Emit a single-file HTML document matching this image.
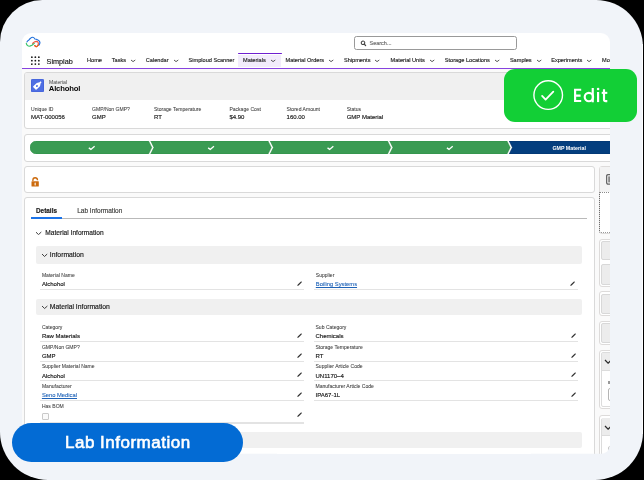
<!DOCTYPE html>
<html><head><meta charset="utf-8">
<style>
*{margin:0;padding:0;box-sizing:border-box}
html,body{width:644px;height:480px;overflow:hidden;background:#000}
body{position:relative;font-family:"Liberation Sans",sans-serif;color:#181818}
.frame{position:absolute;left:0.3px;top:0.3px;width:642.5px;height:480px;border-radius:42.3px 47px 48px 48px;background:#f1f4f9}
.app{will-change:transform;position:absolute;left:0;top:0;width:644px;height:480px;clip-path:inset(33px 34px 26.2px 22px round 9px);background:#fafafa}
.a{position:absolute}
.t{position:absolute;white-space:nowrap;line-height:1;-webkit-text-stroke:0.15px currentColor}
.card{position:absolute;background:#fff;border:1px solid #d9d9d9;border-radius:3px}
.nav{font-size:5.6px;color:#1f1f1f}
.chev{position:absolute;width:3px;height:3px;border-right:0.8px solid #444;border-bottom:0.8px solid #444;transform:rotate(45deg)}
.lbl{font-size:5.05px;color:#3a3a3a;-webkit-text-stroke:0.05px currentColor}
.val{font-size:6px;color:#181818}
.uline{position:absolute;height:1.2px;background:#e3e3e3}
.pen{position:absolute;width:1.5px;height:6px;background:#3a3a3a;transform:rotate(45deg);border-radius:0.5px}
.sec{position:absolute;background:#f0f0f0;border-radius:2px}
.link{margin-top:0.6px;color:#1f63b8;font-size:5.8px;text-decoration:underline;text-decoration-thickness:0.5px;text-underline-offset:0.9px;-webkit-text-stroke:0.1px currentColor}
.sb{position:absolute;left:599.1px;width:30px;background:#fff;border:1px solid #dddbda;border-radius:3px}
.sbbtn{position:absolute;left:601.2px;width:30px;background:#ececec;border:1px solid #d8d8d8;border-radius:2px}
</style></head><body>
<div class="frame"></div>
<div class="a" style="left:641.8px;top:44px;width:1px;height:390px;background:#fcfdfe"></div>
<div class="app">
  <!-- header white -->
  <div class="a" style="left:22px;top:33px;width:588px;height:36px;background:#fff"></div>
  <!-- logo -->
  <svg class="a" style="left:25px;top:36px" width="17" height="12" viewBox="0 0 17 12">
    <path d="M2 5.9 C2.3 4.9 3 4.3 3.7 4.2 C4.3 3.3 4.8 2.6 5.6 2.2 C6.3 1.5 7 1.2 7.75 1.2 C8.8 1.2 9.4 2.2 9.9 3 C10.8 3 11.7 3.2 12.4 3.7 C13.6 4.3 14.3 4.8 14.6 5.6 C15 6.3 15 7 14.8 7.4 C14.6 8.2 14.2 8.8 13.7 9.3" fill="none" stroke="#1f6fdc" stroke-width="1.15" stroke-linecap="round"/>
    <path d="M1.3 7.4 C1.5 8.4 2 9.1 2.6 9.6 C3.1 10 3.6 10.2 4.2 10.2 C5.3 10.2 6.1 9.8 6.8 9.3 C7.7 8.6 8.5 8 9.3 7.3" fill="none" stroke="#38c46a" stroke-width="1.15" stroke-linecap="round"/>
    <path d="M7.6 7.4 C8.2 6.7 8.7 6.3 9.3 6 C10 5.6 10.8 5.4 11.5 5.4 C12.4 5.5 13 6 13.2 6.8 C13.5 7.6 13.4 8.4 13.1 9 C12.7 9.9 12.1 10.5 11.5 10.6 C10.8 10.7 10.2 10.2 9.8 9.6" fill="none" stroke="#f0593f" stroke-width="1.15" stroke-linecap="round"/>
    <path d="M13.1 9 C12.7 9.9 12.1 10.5 11.5 10.6 C10.8 10.7 10.2 10.2 9.8 9.6" fill="none" stroke="#e8651c" stroke-width="1.15" stroke-linecap="round"/>
  </svg>
  <!-- search -->
  <div class="a" style="left:354px;top:36px;width:163px;height:13.8px;border:1.2px solid #999;border-radius:2.5px;background:#fff"></div>
  <svg class="a" style="left:360px;top:40px" width="7" height="7" viewBox="0 0 7 7"><circle cx="3" cy="2.8" r="1.75" fill="none" stroke="#444" stroke-width="1.05"/><path d="M4.2 4.1 L5.6 5.5" stroke="#444" stroke-width="1.2" stroke-linecap="round"/></svg>
  <div class="t" style="left:369.5px;top:41.3px;font-size:5.5px;color:#6b6b6b">Search...</div>

  <!-- nav bar -->
  <div class="a" style="left:22px;top:50px;width:588px;height:19px;background:#fff"></div>
  <svg class="a" style="left:31px;top:56px" width="10" height="10" viewBox="0 0 10 10" fill="#1a1a1a"><circle cx="0.85" cy="1.20" r="0.9"/><circle cx="0.85" cy="4.65" r="0.9"/><circle cx="0.85" cy="8.10" r="0.9"/><circle cx="4.35" cy="1.20" r="0.9"/><circle cx="4.35" cy="4.65" r="0.9"/><circle cx="4.35" cy="8.10" r="0.9"/><circle cx="7.85" cy="1.20" r="0.9"/><circle cx="7.85" cy="4.65" r="0.9"/><circle cx="7.85" cy="8.10" r="0.9"/></svg>
  <div class="t" style="left:46.6px;top:57.7px;font-size:7.25px;color:#181818">Simplab</div>
  <div class="a" style="left:238px;top:55.3px;width:42.8px;height:11.3px;background:#f2ecfb"></div>
  <div class="a" style="left:237.6px;top:53px;width:44px;height:1.3px;background:#6f1fd0;border-radius:0.6px"></div>
  <div class="t nav" style="left:87px;top:58px">Home</div>
  <div class="t nav" style="left:111.8px;top:58px">Tasks</div><svg class="a" style="left:130.20px;top:59.3px" width="7" height="4" viewBox="0 0 7 4"><path d="M1 1 L3.05 2.6 L5.3 1" stroke="#555" stroke-width="1" fill="none"/></svg>
  <div class="t nav" style="left:145.8px;top:58px">Calendar</div><svg class="a" style="left:172.85px;top:59.3px" width="7" height="4" viewBox="0 0 7 4"><path d="M1 1 L3.05 2.6 L5.3 1" stroke="#555" stroke-width="1" fill="none"/></svg>
  <div class="t nav" style="left:188.6px;top:58px">Simploud Scanner</div>
  <div class="t nav" style="left:243px;top:58px">Materials</div><svg class="a" style="left:270.05px;top:59.3px" width="7" height="4" viewBox="0 0 7 4"><path d="M1 1 L3.05 2.6 L5.3 1" stroke="#555" stroke-width="1" fill="none"/></svg>
  <div class="t nav" style="left:285.5px;top:58px">Material Orders</div><svg class="a" style="left:328.30px;top:59.3px" width="7" height="4" viewBox="0 0 7 4"><path d="M1 1 L3.05 2.6 L5.3 1" stroke="#555" stroke-width="1" fill="none"/></svg>
  <div class="t nav" style="left:344px;top:58px">Shipments</div><svg class="a" style="left:374.30px;top:59.3px" width="7" height="4" viewBox="0 0 7 4"><path d="M1 1 L3.05 2.6 L5.3 1" stroke="#555" stroke-width="1" fill="none"/></svg>
  <div class="t nav" style="left:390.6px;top:58px">Material Units</div><svg class="a" style="left:429.20px;top:59.3px" width="7" height="4" viewBox="0 0 7 4"><path d="M1 1 L3.05 2.6 L5.3 1" stroke="#555" stroke-width="1" fill="none"/></svg>
  <div class="t nav" style="left:444.8px;top:58px">Storage Locations</div><svg class="a" style="left:494.30px;top:59.3px" width="7" height="4" viewBox="0 0 7 4"><path d="M1 1 L3.05 2.6 L5.3 1" stroke="#555" stroke-width="1" fill="none"/></svg>
  <div class="t nav" style="left:509.9px;top:58px">Samples</div><svg class="a" style="left:536.10px;top:59.3px" width="7" height="4" viewBox="0 0 7 4"><path d="M1 1 L3.05 2.6 L5.3 1" stroke="#555" stroke-width="1" fill="none"/></svg>
  <div class="t nav" style="left:551.2px;top:58px">Experiments</div><svg class="a" style="left:586.30px;top:59.3px" width="7" height="4" viewBox="0 0 7 4"><path d="M1 1 L3.05 2.6 L5.3 1" stroke="#555" stroke-width="1" fill="none"/></svg>
  <div class="t nav" style="left:602px;top:58px">More</div>
  <div class="a" style="left:22px;top:68px;width:588px;height:1.4px;background:#8743df"></div>

  <!-- material header card -->
  <div class="card" style="left:23.6px;top:72.3px;width:620px;height:56.8px;overflow:hidden">
    <div class="a" style="left:0;top:0;width:100%;height:26.8px;background:#f0f0f0"></div>
  </div>
  <div class="a" style="left:30.8px;top:79px;width:13.2px;height:13.4px;background:#4f6fe3;border-radius:1.6px;box-shadow:inset 0 0 0 0.6px #4260d8"></div>
  <svg class="a" style="left:30.8px;top:79px" width="13.2" height="13.4" viewBox="0 0 13.2 13.4">
    <g transform="translate(7.1 5.8) rotate(45)">
      <path d="M-2.3 -0.4 L-0.75 -2.9 L-0.75 -4.2 L0.75 -4.2 L0.75 -2.9 L2.3 -0.4 L2.3 4.5 Q2.3 5.2 1.6 5.2 L-1.6 5.2 Q-2.3 5.2 -2.3 4.5 Z" fill="#fff"/>
      <path d="M-1 1.6 A1 1 0 0 0 1 1.6 Z" fill="#4f6fe3"/>
      <circle cx="0" cy="1.5" r="0.85" fill="#4f6fe3"/>
    </g>
  </svg>
  <div class="t" style="left:48.9px;top:79.5px;font-size:5.1px;color:#444;-webkit-text-stroke:0">Material</div>
  <div class="t" style="left:48.8px;top:85.2px;font-size:7.7px;letter-spacing:-0.2px;font-weight:bold;color:#080707;-webkit-text-stroke:0">Alchohol</div>

  <div class="t lbl" style="left:31px;top:106.9px">Unique ID</div>
  <div class="t val" style="left:31px;top:113.8px">MAT-000056</div>
  <div class="t lbl" style="left:92px;top:106.9px">GMP/Non GMP?</div>
  <div class="t val" style="left:92px;top:113.8px">GMP</div>
  <div class="t lbl" style="left:154px;top:106.9px">Storage Temperature</div>
  <div class="t val" style="left:154px;top:113.8px">RT</div>
  <div class="t lbl" style="left:229.4px;top:106.9px">Package Cost</div>
  <div class="t val" style="left:229.4px;top:113.8px">$4.90</div>
  <div class="t lbl" style="left:286.6px;top:106.9px">Stored Amount</div>
  <div class="t val" style="left:286.6px;top:113.8px">160.00</div>
  <div class="t lbl" style="left:346.7px;top:106.9px">Status</div>
  <div class="t val" style="left:346.7px;top:113.8px">GMP Material</div>

  <!-- path card -->
  <div class="card" style="left:23.6px;top:134.3px;width:620px;height:27.3px"></div>
  <svg class="a" style="left:30px;top:141px" width="590" height="13" viewBox="0 0 590 13">
    <path d="M6.5 0 H118.50 L121.70 6.5 L118.50 13 H6.5 A6.5 6.5 0 0 1 6.5 0 Z" fill="#3a9b53" stroke="#2b8e45" stroke-width="0.6"/>
    <path d="M120.80 0 H237.97 L241.17 6.5 L237.97 13 H120.80 L124.00 6.5 Z" fill="#3a9b53" stroke="#2b8e45" stroke-width="0.6"/>
    <path d="M240.27 0 H357.44 L360.64 6.5 L357.44 13 H240.27 L243.47 6.5 Z" fill="#3a9b53" stroke="#2b8e45" stroke-width="0.6"/>
    <path d="M359.74 0 H476.91 L480.11 6.5 L476.91 13 H359.74 L362.94 6.5 Z" fill="#3a9b53" stroke="#2b8e45" stroke-width="0.6"/>
    <path d="M479.21 0 H590 V13 H479.21 L482.41 6.5 Z" fill="#043e7e" stroke="#032f66" stroke-width="0.6"/>
    <g fill="none" stroke="#fff" stroke-width="1.3">
      <path d="M58.80 6.9 L60.90 8.4 L64.60 5.25"/>
      <path d="M178.17 6.9 L180.27 8.4 L183.97 5.25"/>
      <path d="M297.54 6.9 L299.64 8.4 L303.34 5.25"/>
      <path d="M416.91 6.9 L419.01 8.4 L422.71 5.25"/>
    </g>
  </svg>
  <div class="t" style="left:552.4px;top:145.8px;font-size:5.3px;font-weight:bold;color:#fff;-webkit-text-stroke:0">GMP Material</div>

  <!-- lock card -->
  <div class="card" style="left:23.6px;top:166.3px;width:571px;height:26.4px"></div>
  <svg class="a" style="left:30.6px;top:176.9px" width="9" height="10" viewBox="0 0 9 10">
    <path d="M1.9 4 V3.1 C1.9 1.5 2.9 0.75 4.1 0.75 C5.3 0.75 6.4 1.5 6.5 3 L6.5 3.3" fill="none" stroke="#cc6a0c" stroke-width="1.35"/>
    <rect x="0.5" y="4.3" width="7.3" height="5.3" rx="0.5" fill="#cc6a0c"/>
    <rect x="3.6" y="5.6" width="1.1" height="2.9" rx="0.5" fill="#fff"/>
  </svg>

  <!-- tabs card -->
  <div class="card" style="left:23.6px;top:197.1px;width:571px;height:300px"></div>
  <div class="t" style="left:36px;top:207.6px;font-size:6.4px;font-weight:bold;color:#181818">Details</div>
  <div class="t" style="left:77.2px;top:207.6px;font-size:6.5px;color:#3e3e3c">Lab Information</div>
  <div class="a" style="left:30.9px;top:218px;width:556px;height:1px;background:#b9b9b9"></div>
  <div class="a" style="left:30.9px;top:217.4px;width:31.3px;height:1.6px;background:#1b73e8"></div>
  <svg class="a" style="left:35.10px;top:230.80px" width="7.3" height="4.6"><path d="M1.00 1.20 L3.50 3.60 L6.30 1.00" stroke="#3e3e3e" stroke-width="1.0" fill="none"/></svg>
  <div class="t" style="left:45.3px;top:229.6px;font-size:6.6px;color:#181818">Material Information</div>

  <!-- section Information -->
  <div class="sec" style="left:36px;top:246.4px;width:546px;height:17.2px"></div>
  <svg class="a" style="left:41.00px;top:253.40px" width="7.2" height="4.5"><path d="M1.00 1.00 L3.50 3.50 L6.20 1.00" stroke="#3e3e3e" stroke-width="1.0" fill="none"/></svg>
  <div class="t" style="left:49.8px;top:252.2px;font-size:6.8px;color:#181818">Information</div>

  <div class="t lbl" style="left:41.9px;top:273px">Material Name</div>
  <div class="t val" style="left:41.9px;top:281.4px">Alchohol</div>
  <div class="uline" style="left:40.4px;top:289px;width:263.6px"></div>
  <svg class="a" style="left:296.65px;top:280.90px" width="5.2" height="5.2" viewBox="0 0 5.2 5.2"><path d="M0.2 5.0 L0.75 3.55 L3.65 0.65 Q4.15 0.15 4.65 0.6 Q5.05 1.05 4.6 1.55 L1.65 4.45 Z" fill="#333"/></svg>
  <svg class="a" style="left:570.45px;top:280.90px" width="5.2" height="5.2" viewBox="0 0 5.2 5.2"><path d="M0.2 5.0 L0.75 3.55 L3.65 0.65 Q4.15 0.15 4.65 0.6 Q5.05 1.05 4.6 1.55 L1.65 4.45 Z" fill="#333"/></svg>
  <div class="t lbl" style="left:315.8px;top:273px">Supplier</div>
  <div class="t val link" style="left:315.8px;top:281.4px">Boiling Systems</div>
  <div class="uline" style="left:314.2px;top:289px;width:263.8px"></div>

  <!-- section Material Information -->
  <div class="sec" style="left:36px;top:298.8px;width:546px;height:16.4px"></div>
  <svg class="a" style="left:40.90px;top:305.20px" width="7.4" height="4.5"><path d="M1.00 1.00 L3.60 3.50 L6.40 1.00" stroke="#3e3e3e" stroke-width="1.0" fill="none"/></svg>
  <div class="t" style="left:49.8px;top:304.2px;font-size:6.8px;color:#181818">Material Information</div>

  <div class="t lbl" style="left:41.9px;top:325.4px">Category</div>
  <div class="t val" style="left:41.9px;top:332.8px">Raw Materials</div>
  <div class="uline" style="left:40.4px;top:341.2px;width:263.7px"></div>
  <svg class="a" style="left:297.05px;top:332.75px" width="5.2" height="5.2" viewBox="0 0 5.2 5.2"><path d="M0.2 5.0 L0.75 3.55 L3.65 0.65 Q4.15 0.15 4.65 0.6 Q5.05 1.05 4.6 1.55 L1.65 4.45 Z" fill="#333"/></svg>
  <div class="t lbl" style="left:41.9px;top:344.5px">GMP/Non GMP?</div>
  <div class="t val" style="left:41.9px;top:352.6px">GMP</div>
  <div class="uline" style="left:40.4px;top:361.1px;width:263.7px"></div>
  <svg class="a" style="left:297.05px;top:352.55px" width="5.2" height="5.2" viewBox="0 0 5.2 5.2"><path d="M0.2 5.0 L0.75 3.55 L3.65 0.65 Q4.15 0.15 4.65 0.6 Q5.05 1.05 4.6 1.55 L1.65 4.45 Z" fill="#333"/></svg>
  <div class="t lbl" style="left:41.9px;top:364.4px">Supplier Material Name</div>
  <div class="t val" style="left:41.9px;top:372.5px">Alchohol</div>
  <div class="uline" style="left:40.4px;top:380.1px;width:263.7px"></div>
  <svg class="a" style="left:297.05px;top:371.55px" width="5.2" height="5.2" viewBox="0 0 5.2 5.2"><path d="M0.2 5.0 L0.75 3.55 L3.65 0.65 Q4.15 0.15 4.65 0.6 Q5.05 1.05 4.6 1.55 L1.65 4.45 Z" fill="#333"/></svg>
  <div class="t lbl" style="left:41.9px;top:384.4px">Manufacturer</div>
  <div class="t val link" style="left:41.9px;top:392.3px">Seno Medical</div>
  <div class="uline" style="left:40.4px;top:400.2px;width:263.7px"></div>
  <svg class="a" style="left:297.05px;top:391.75px" width="5.2" height="5.2" viewBox="0 0 5.2 5.2"><path d="M0.2 5.0 L0.75 3.55 L3.65 0.65 Q4.15 0.15 4.65 0.6 Q5.05 1.05 4.6 1.55 L1.65 4.45 Z" fill="#333"/></svg>
  <div class="t lbl" style="left:41.9px;top:404.2px">Has BOM</div>
  <div class="a" style="left:41.9px;top:412.8px;width:6.8px;height:6.8px;border:0.8px solid #c9c9c9;border-radius:1px;background:#fafafa"></div>
  <div class="uline" style="left:40.4px;top:422.4px;width:263.7px"></div>
  <svg class="a" style="left:297.05px;top:411.80px" width="5.2" height="5.2" viewBox="0 0 5.2 5.2"><path d="M0.2 5.0 L0.75 3.55 L3.65 0.65 Q4.15 0.15 4.65 0.6 Q5.05 1.05 4.6 1.55 L1.65 4.45 Z" fill="#333"/></svg>
  <div class="t lbl" style="left:315.5px;top:325.4px">Sub Category</div>
  <div class="t val" style="left:315.5px;top:332.8px">Chemicals</div>
  <div class="uline" style="left:314.2px;top:341.2px;width:263.7px"></div>
  <svg class="a" style="left:570.85px;top:332.75px" width="5.2" height="5.2" viewBox="0 0 5.2 5.2"><path d="M0.2 5.0 L0.75 3.55 L3.65 0.65 Q4.15 0.15 4.65 0.6 Q5.05 1.05 4.6 1.55 L1.65 4.45 Z" fill="#333"/></svg>
  <div class="t lbl" style="left:315.5px;top:344.5px">Storage Temperature</div>
  <div class="t val" style="left:315.5px;top:352.6px">RT</div>
  <div class="uline" style="left:314.2px;top:361.1px;width:263.7px"></div>
  <svg class="a" style="left:570.85px;top:352.55px" width="5.2" height="5.2" viewBox="0 0 5.2 5.2"><path d="M0.2 5.0 L0.75 3.55 L3.65 0.65 Q4.15 0.15 4.65 0.6 Q5.05 1.05 4.6 1.55 L1.65 4.45 Z" fill="#333"/></svg>
  <div class="t lbl" style="left:315.5px;top:364.4px">Supplier Article Code</div>
  <div class="t val" style="left:315.5px;top:372.5px">UN1170–4</div>
  <div class="uline" style="left:314.2px;top:380.1px;width:263.7px"></div>
  <svg class="a" style="left:570.85px;top:371.55px" width="5.2" height="5.2" viewBox="0 0 5.2 5.2"><path d="M0.2 5.0 L0.75 3.55 L3.65 0.65 Q4.15 0.15 4.65 0.6 Q5.05 1.05 4.6 1.55 L1.65 4.45 Z" fill="#333"/></svg>
  <div class="t lbl" style="left:315.5px;top:384.4px">Manufacturer Article Code</div>
  <div class="t val" style="left:315.5px;top:392.3px">IPA67-1L</div>
  <div class="uline" style="left:314.2px;top:400.2px;width:263.7px"></div>
  <svg class="a" style="left:570.85px;top:391.75px" width="5.2" height="5.2" viewBox="0 0 5.2 5.2"><path d="M0.2 5.0 L0.75 3.55 L3.65 0.65 Q4.15 0.15 4.65 0.6 Q5.05 1.05 4.6 1.55 L1.65 4.45 Z" fill="#333"/></svg>

  <div class="sec" style="left:36px;top:431.8px;width:546px;height:16.4px"></div>

  <!-- right sidebar -->
  <div class="sb" style="top:166.3px;height:67.5px"></div>
  <div class="a" style="left:600px;top:167.1px;width:12px;height:25px;background:#f3f3f3"></div>
  <svg class="a" style="left:605.5px;top:174.4px" width="6" height="11" viewBox="0 0 6 11"><rect x="0.6" y="0.6" width="6" height="9.6" rx="1.6" fill="none" stroke="#666" stroke-width="1.3"/><rect x="2.2" y="2.4" width="4" height="6" fill="#888"/></svg>
  <div class="a" style="left:599.1px;top:192.2px;width:14px;height:40.6px;border-left:1px dotted #6f6f6f;border-top:1px dotted #8a8a8a;border-bottom:1px dotted #9a9a9a;border-radius:0 0 0 1.5px"></div>
  <div class="sb" style="top:239.2px;height:48px"></div>
  <div class="sbbtn" style="top:241.3px;height:19.2px"></div>
  <div class="sbbtn" style="top:264.3px;height:20.3px"></div>
  <div class="sb" style="top:291.1px;height:24.8px"></div>
  <div class="sbbtn" style="top:293.8px;height:20.3px"></div>
  <div class="sb" style="top:320.5px;height:24.1px"></div>
  <div class="sbbtn" style="top:322.9px;height:19.7px"></div>
  <div class="sb" style="top:349.7px;height:59.4px"></div>
  <div class="a" style="left:601.2px;top:352px;width:14px;height:55px;border:1px solid #dcdcdc;border-radius:2px;background:#fff"></div>
  <div class="a" style="left:602px;top:352.8px;width:14px;height:18.6px;background:#ececec;border-bottom:1px solid #dcdcdc"></div>
  <svg class="a" style="left:603.80px;top:359.00px" width="8.4" height="5.2"><path d="M1.00 1.00 L4.10 4.20 L7.40 1.00" stroke="#2b2b2b" stroke-width="1.2" fill="none"/></svg>
  <div class="a" style="left:607.6px;top:381px;width:4px;height:3px;background:#9a9a9a"></div>
  <div class="a" style="left:607.5px;top:388px;width:10px;height:13px;border:1px solid #b5b5b5;border-radius:2px"></div>
  <div class="sb" style="top:415.2px;height:60px"></div>
  <div class="a" style="left:601.2px;top:417.5px;width:14px;height:55px;border:1px solid #dcdcdc;border-radius:2px;background:#fff"></div>
  <div class="a" style="left:602px;top:418.3px;width:14px;height:17.6px;background:#ececec;border-bottom:1px solid #dcdcdc"></div>
  <svg class="a" style="left:603.80px;top:425.20px" width="8.4" height="5.2"><path d="M1.00 1.00 L4.10 4.20 L7.40 1.00" stroke="#2b2b2b" stroke-width="1.2" fill="none"/></svg>
  <div class="a" style="left:607.5px;top:446px;width:10px;height:13px;border:1px solid #c5c5c5;border-radius:2px"></div>
</div>

<!-- Edit badge -->
<div class="a" style="left:503.8px;top:68.9px;width:133.2px;height:52.8px;background:#12cf36;border-radius:11px"></div>
<svg class="a" style="left:530px;top:77px" width="36" height="36" viewBox="0 0 36 36">
  <circle cx="18.2" cy="18.1" r="14.3" fill="none" stroke="#fff" stroke-width="1.4"/>
  <path d="M12.1 18.9 L15.6 22.6 L23.3 14.6" fill="none" stroke="#fff" stroke-width="1.8" stroke-linecap="round" stroke-linejoin="round"/>
</svg>
<svg class="a" style="left:570px;top:84px" width="40" height="22" viewBox="570 84 40 22">
  <g fill="none" stroke="#fff" stroke-width="2.15">
    <path d="M581.2 89.75 H575.1 V101 H581.2 M575.1 95.6 H580.6"/>
    <circle cx="588.9" cy="97.05" r="4.2"/>
    <path d="M592.75 88 V102.3"/>
    <path d="M598.1 92 V102.1"/>
    <path d="M604 89.3 V99.4 Q604 101.1 605.7 101.1 H607.3"/>
    <path d="M601.7 92.85 H607.3" stroke-width="2.05"/>
  </g>
  <circle cx="598.1" cy="88.95" r="1.3" fill="#fff"/>
</svg>

<!-- Lab Information pill -->
<div class="a" style="left:12px;top:422.8px;width:231px;height:38.8px;background:#036bd4;border-radius:19.4px"></div>
<div class="t" style="left:64.6px;top:434.2px;font-size:17px;letter-spacing:0.5px;color:#fff;-webkit-text-stroke:0.6px #fff;will-change:transform">Lab Information</div>
</body></html>
